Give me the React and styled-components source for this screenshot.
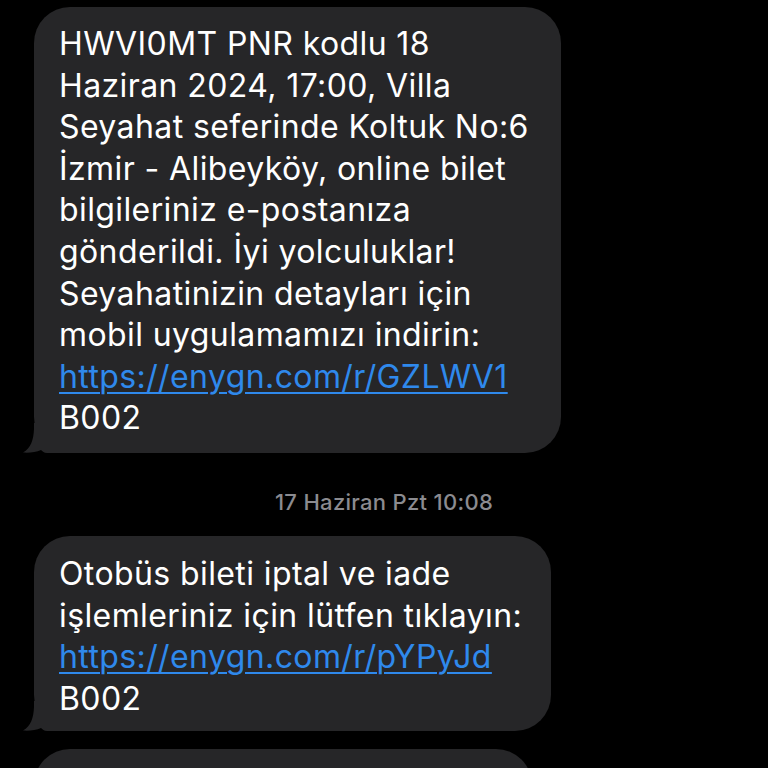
import React from "react";
import styled, { createGlobalStyle } from "styled-components";

const Global = createGlobalStyle`
  html, body { margin: 0; padding: 0; background: #000; }
  body { overflow: hidden; width: 768px; height: 768px; }
`;

const Thread = styled.div`
  display: flex;
  flex-direction: column;
  align-items: flex-start;
  padding: 7px 0 0 34px;
  width: 768px;
  height: 768px;
  box-sizing: border-box;
  overflow: hidden;
  font-family: Inter, "Noto Sans", sans-serif;
`;

const Bubble = styled.div`
  position: relative;
  flex: none;
  box-sizing: border-box;
  width: ${(p) => p.$w}px;
  min-height: ${(p) => p.$h || 0}px;
  background: #262628;
  border-radius: 36px;
  padding: ${(p) => p.$pt ?? 16}px 0 ${(p) => p.$pb ?? 14}px 25px;
  color: #fff;
  font-size: 32px;
  line-height: 41.6px;
  letter-spacing: 0.4px;
`;

const Line = styled.div`
  position: relative;
  z-index: 1;
  white-space: nowrap;
`;

const Link = styled.a`
  color: #2f89ec;
  text-decoration: underline;
  text-decoration-thickness: 2px;
  text-underline-offset: 4px;
`;

const TailSvg = styled.svg`
  position: absolute;
  z-index: 0;
  left: -11px;
  bottom: 0;
  width: 50px;
  height: 30px;
`;

const Stamp = styled.div`
  align-self: stretch;
  flex: none;
  margin-left: -34px;
  text-align: center;
  color: #8b8b90;
  font-size: 22px;
  font-weight: 500;
  letter-spacing: 0.3px;
  line-height: 26px;
  margin-top: 36px;
  margin-bottom: 21px;
`;

const Gap = styled.div`
  height: ${(p) => p.$h}px;
  flex: none;
`;

const Tail = () => (
  <TailSvg viewBox="0 0 50 30">
    <path
      d="M11 0 L50 0 L50 30 L24 30 C21 30 19.5 28.5 18 27 C13 29.5 6 30 0 29.6 C8 25 10.5 17 11 6 Z"
      fill="#262628"
    />
  </TailSvg>
);

export default function App() {
  return (
    <>
      <Global />
      <Thread>
        <Bubble $w={527}>
          <Tail />
          <Line>HWVI0MT PNR kodlu 18</Line>
          <Line>Haziran 2024, 17:00, Villa</Line>
          <Line>Seyahat seferinde Koltuk No:6</Line>
          <Line>İzmir - Alibeyköy, online bilet</Line>
          <Line>bilgileriniz e-postanıza</Line>
          <Line>gönderildi. İyi yolculuklar!</Line>
          <Line>Seyahatinizin detayları için</Line>
          <Line>mobil uygulamamızı indirin:</Line>
          <Line>
            <Link href="#">https://enygn.com/r/GZLWV1</Link>
          </Line>
          <Line>B002</Line>
        </Bubble>
        <Stamp>17 Haziran Pzt 10:08</Stamp>
        <Bubble $w={517} $pt={17} $pb={12}>
          <Tail />
          <Line>Otobüs bileti iptal ve iade</Line>
          <Line>işlemleriniz için lütfen tıklayın:</Line>
          <Line>
            <Link href="#">https://enygn.com/r/pYPyJd</Link>
          </Line>
          <Line>B002</Line>
        </Bubble>
        <Gap $h={18} />
        <Bubble $w={498} $h={80} />
      </Thread>
    </>
  );
}
